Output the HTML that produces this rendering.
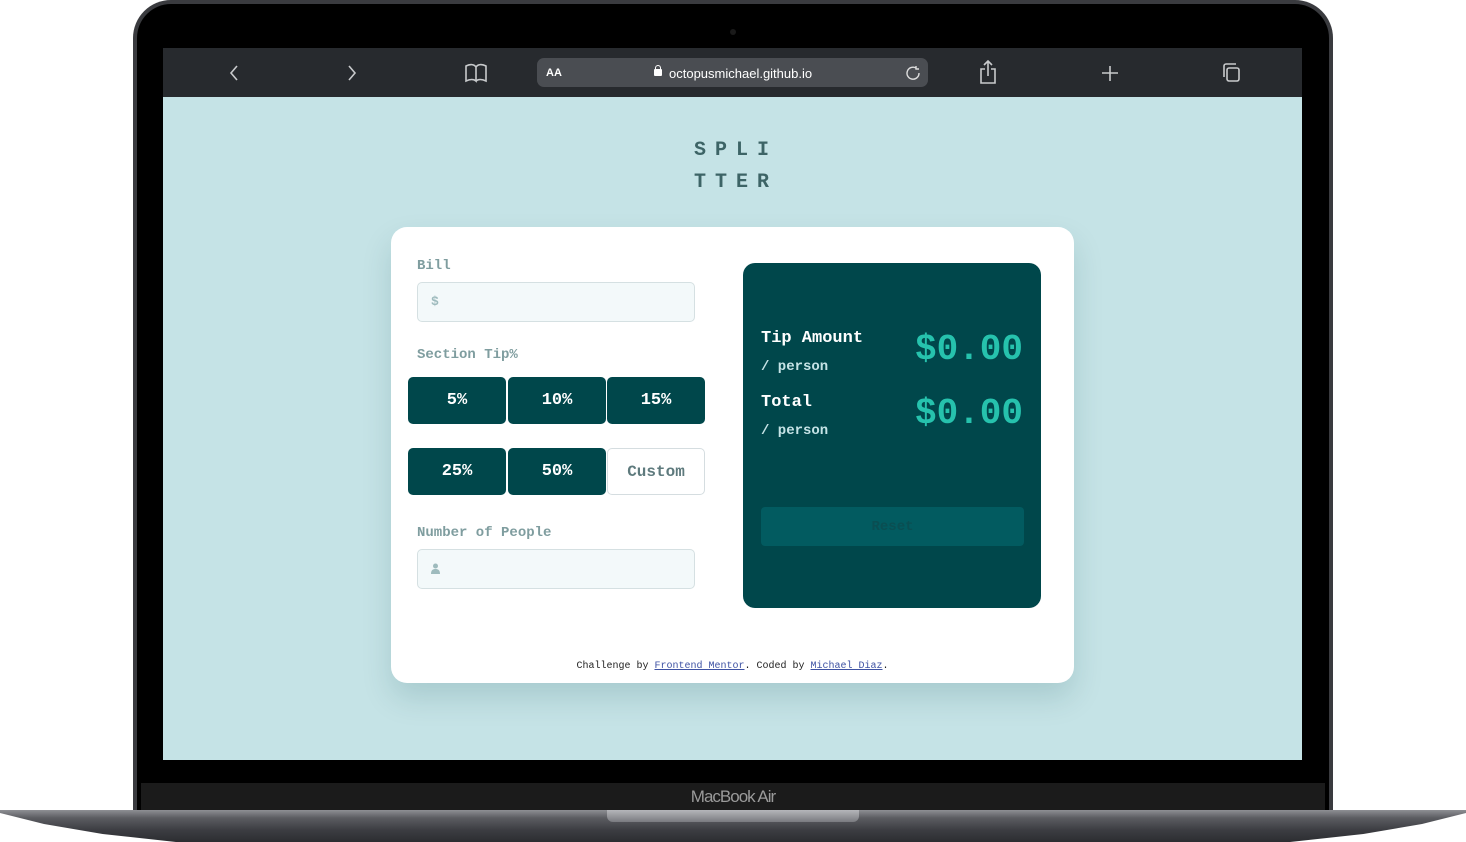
<!DOCTYPE html>
<html><head><meta charset="utf-8"><style>
*{margin:0;padding:0;box-sizing:border-box}
body{width:1466px;height:842px;background:#fff;position:relative;overflow:hidden;font-family:"Liberation Mono",monospace}
.abs{position:absolute}
.lid{left:133px;top:0;width:1200px;height:815px;border-radius:38px 38px 0 0;background:#3a3b3f;}
.bezel{left:137px;top:4px;width:1192px;height:811px;border-radius:34px 34px 0 0;background:#000}
.screen{left:163px;top:48px;width:1139px;height:712px;background:#c5e3e6}
.bar{left:163px;top:48px;width:1139px;height:49px;background:#272a2e}
.chin{left:141px;top:783px;width:1184px;height:28px;background:#1b1b1b;color:#9a9a9a;font-family:"Liberation Sans",sans-serif;font-size:17px;text-align:center;line-height:28px;letter-spacing:-1px}
.base{left:0;top:810px;width:1466px;height:32px;background:linear-gradient(#8e8f94 0,#5b5c61 8px,#3c3d42 20px,#2c2d31 32px);clip-path:polygon(0 0,100% 0,100% 3px,97% 14px,93% 24px,88% 32px,12% 32px,7% 24px,3% 14px,0 3px)}
.notch{left:607px;top:810px;width:252px;height:12px;background:linear-gradient(#b5b6ba,#7a7b80);border-radius:0 0 6px 6px}
.url{left:537px;top:58px;width:391px;height:29px;border-radius:7px;background:#4a4d52;color:#fff;font-family:"Liberation Sans",sans-serif;font-size:13px}
.card{left:391px;top:227px;width:683px;height:456px;background:#fff;border-radius:16px;box-shadow:0 15px 30px rgba(0,70,75,.15)}
.lbl{color:#7f9d9f;font-weight:bold;font-size:14px}
.inp{background:#f3f9fa;border:1px solid #d5e0e2;border-radius:5px;width:278px;height:40px}
.btn{width:98px;height:47px;background:#00474b;color:#fff;font-weight:bold;font-size:17px;border-radius:5px;text-align:center;line-height:47px}
.res{left:743px;top:263px;width:298px;height:345px;background:#00474b;border-radius:12px}
.w{color:#fff;font-weight:bold;font-size:17px}
.p{color:#c5e3e6;font-weight:bold;font-size:14px}
.big{color:#26c2ad;font-weight:bold;font-size:36px}
</style></head><body>
<div class="abs lid"></div>
<div class="abs bezel"></div>
<div class="abs" style="left:730px;top:29px;width:6px;height:6px;border-radius:3px;background:#1a1a1a"></div>
<div class="abs screen"></div>
<div class="abs bar"></div>
<svg class="abs" style="left:163px;top:48px" width="1139" height="49" fill="none" stroke="#c8cacc" stroke-width="1.6">
<path d="M74 18l-6 7 6 7"/><path d="M186 18l6 7-6 7"/>
<path d="M303 18c4-2 8-2 10 1v14c-2-2-6-2-10 0zM313 19c2-3 6-3 10-1v15c-4-2-8-2-10 0"/>
<path d="M822 21h-4v14h14V21h-4M825 28V13M821 17l4-4 4 4"/>
<path d="M947 18v15M939 25h16"/>
<rect x="1064" y="20" width="12" height="13" rx="2"/><path d="M1061 29v-11a2 2 0 0 1 2-2h10"/>
</svg>
<div class="abs url"><span class="abs" style="left:9px;top:9px;font-size:11px;font-weight:bold">AA</span>
<span class="abs" style="left:117px;top:11px;width:8px;height:7px;background:#fff;border-radius:1px"></span>
<span class="abs" style="left:118px;top:7px;width:6px;height:6px;border:1.5px solid #fff;border-bottom:none;border-radius:3px 3px 0 0"></span>
<span class="abs" style="left:132px;top:8px">octopusmichael.github.io</span>
<svg class="abs" style="left:368px;top:7px" width="16" height="16" fill="none" stroke="#ddd" stroke-width="1.4"><path d="M11 3a6 6 0 1 0 3 5M11 1v3h3"/></svg></div>
<div class="abs" style="left:694px;top:135px;color:#3d6466;font-weight:bold;font-size:20px;letter-spacing:9px;line-height:32px">SPLI<br>TTER</div>
<div class="abs card">
<div class="abs lbl" style="left:26px;top:31px">Bill</div>
<div class="abs inp" style="left:26px;top:55px"><span class="abs" style="left:13px;top:11px;color:#9ebbbd;font-size:13px;font-weight:bold">$</span></div>
<div class="abs lbl" style="left:26px;top:120px">Section Tip%</div>
<div class="abs btn" style="left:17px;top:150px">5%</div>
<div class="abs btn" style="left:117px;top:150px">10%</div>
<div class="abs btn" style="left:216px;top:150px">15%</div>
<div class="abs btn" style="left:17px;top:221px">25%</div>
<div class="abs btn" style="left:117px;top:221px">50%</div>
<div class="abs btn" style="left:216px;top:221px;background:#fff;border:1px solid #d5dde0;color:#5e7a7d;font-size:16px;line-height:47px">Custom</div>
<div class="abs lbl" style="left:26px;top:298px">Number of People</div>
<div class="abs inp" style="left:26px;top:322px"><svg class="abs" style="left:13px;top:13px" width="9" height="11" fill="#9ebbbd"><circle cx="4.5" cy="3" r="2.5"/><path d="M0 11c0-4 2-5 4.5-5s4.5 1 4.5 5z"/></svg></div>
<div class="abs" style="left:0;width:683px;top:434px;text-align:center;font-size:10px;color:#222">Challenge by <u style="color:#3e52a3">Frontend Mentor</u>. Coded by <u style="color:#3e52a3">Michael Diaz</u>.</div>
</div>
<div class="abs res">
<div class="abs w" style="left:18px;top:66px">Tip Amount</div>
<div class="abs p" style="left:18px;top:96px">/ person</div>
<div class="abs big" style="right:18px;top:66px">$0.00</div>
<div class="abs w" style="left:18px;top:130px">Total</div>
<div class="abs p" style="left:18px;top:160px">/ person</div>
<div class="abs big" style="right:18px;top:130px">$0.00</div>
<div class="abs" style="left:18px;top:244px;width:263px;height:39px;background:#025b60;border-radius:4px;text-align:center;line-height:41px;font-size:14px;font-weight:bold;color:#0a4e52">Reset</div>
</div>
<div class="abs chin">MacBook Air</div>
<div class="abs base"></div>
<div class="abs notch"></div>
</body></html>
